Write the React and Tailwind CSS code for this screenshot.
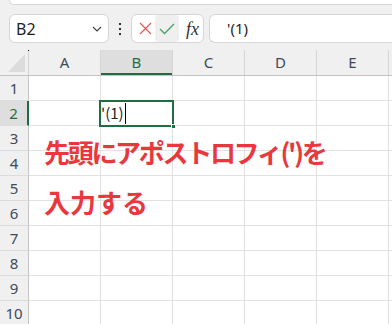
import React from 'react'

const UI = "font-['Noto_Sans','Noto_Sans_CJK_JP',sans-serif]"
const COLS = ['A', 'B', 'C', 'D', 'E', '']
const ROWS = [1, 2, 3, 4, 5, 6, 7, 8, 9, 10]

function HeaderRow() {
  return (
    <div className="flex h-[26px] border-b border-[#c4c4c4]">
      {/* corner */}
      <div className="relative w-[29px] shrink-0 border-r border-[#d4d4d4]">
        <svg className="absolute left-0 top-0" width="29" height="26" viewBox="0 0 29 26">
          <polygon points="25,4 25,22 8,22" fill="#dcdcdc" />
          <rect x="28" y="0" width="1" height="1" fill="#111" />
        </svg>
      </div>
      {COLS.map((c, i) => (
        <div
          key={i}
          className={
            'w-[72px] shrink-0 flex items-center justify-center text-[15px] border-r ' +
            (c === 'B'
              ? 'bg-[#dedede] text-[#1e6e42] border-[#d4d4d4] shadow-[inset_0_-2px_0_#1e6e42]'
              : 'text-[#3d4a5a] border-[#d4d4d4]')
          }
        >
          {c}
        </div>
      ))}
    </div>
  )
}

function SheetRow({ n }) {
  const active = n === 2
  return (
    <div className="flex h-[25px]">
      <div
        className={
          'w-[29px] shrink-0 flex items-center justify-center text-[15px] border-b border-[#dcdcdc] ' +
          (active
            ? 'bg-[#dedede] text-[#1e6e42] border-r-2 border-r-[#1e6e42]'
            : 'bg-[#f0f0f0] text-[#3d4a5a] border-r border-r-[#c4c4c4]')
        }
      >
        {n}
      </div>
      {COLS.map((c, i) => (
        <div key={i} className="w-[72px] shrink-0 bg-white border-r border-b border-[#e1e1e1]" />
      ))}
    </div>
  )
}

export default function App() {
  return (
    <div className={'relative w-[392px] h-[324px] overflow-hidden bg-[#f0f0f0] ' + UI}>
      {/* ribbon bottom edge */}
      <div className="ml-[9px] h-[5px] bg-white rounded-bl-[7px] border-b border-l border-[#d6d6d6]" />

      {/* formula bar */}
      <div className="flex items-center h-[29px] mt-[9px] mb-[7px]">
        <div className="ml-[9px] w-[100px] h-[29px] flex items-center justify-between bg-white border border-[#d6d6d6] rounded-[6px] pl-[6px] pr-[6px]">
          <span className="text-[16px] text-[#1f1f1f]">B2</span>
          <svg width="10" height="6" viewBox="0 0 10 6">
            <polyline points="1,1 5,5 9,1" fill="none" stroke="#444" strokeWidth="1.2" />
          </svg>
        </div>
        <div className="w-[22px] flex flex-col items-center gap-[3px]">
          <span className="w-[2px] h-[2px] bg-[#333]" />
          <span className="w-[2px] h-[2px] bg-[#333]" />
          <span className="w-[2px] h-[2px] bg-[#333]" />
        </div>
        <div className="w-[73px] h-[29px] flex items-center bg-white border border-[#d6d6d6] rounded-[6px] pl-[4px]">
          <div className="w-[18px] flex justify-center">
            <svg width="13" height="13" viewBox="0 0 13 13">
              <path d="M1 1 L12 12 M12 1 L1 12" stroke="#e25c5c" strokeWidth="1.3" fill="none" />
            </svg>
          </div>
          <div className="ml-[1px] w-[24px] h-[27px] rounded-[4px] bg-[#efefef] flex items-center justify-center">
            <svg width="16" height="12" viewBox="0 0 16 12">
              <polyline points="1,6 5.5,10.5 15,1" stroke="#4aa067" strokeWidth="1.3" fill="none" />
            </svg>
          </div>
          <span className="ml-[7px] text-[18px] italic text-[#333] font-['Liberation_Serif',serif] leading-none">fx</span>
        </div>
        <div className="ml-[5px] flex-1 h-[29px] bg-white border border-r-0 border-[#d6d6d6] rounded-l-[6px] flex items-center pl-[17px]">
          <span className="text-[15px] text-[#1f1f1f]">'(1)</span>
        </div>
      </div>

      {/* grid */}
      <div className="relative">
        <HeaderRow />
        {ROWS.map(n => (
          <SheetRow key={n} n={n} />
        ))}

        {/* active cell B2 */}
        <div className="absolute left-[99px] top-[50px] w-[75px] h-[27px] border-2 border-[#1e6e42] flex items-center">
          <span className="text-[15px] text-[#1f1f1f] font-['Noto_Sans_CJK_JP',sans-serif]">'(1)</span>
          <span className="ml-[1px] w-[1px] h-[21px] bg-black" />
          <span className="absolute right-[-4px] bottom-[-4px] w-[5px] h-[5px] bg-[#1e6e42] border border-white" />
        </div>

        {/* annotation */}
        <div className="absolute left-[44px] top-[77px] text-[26px] leading-[50px] font-bold text-[#e8383d] font-['Noto_Sans_CJK_JP',sans-serif]">
          <p className="tracking-[-2.3px] whitespace-nowrap">先頭にアポストロフィ(')を</p>
          <p>入力する</p>
        </div>
      </div>
    </div>
  )
}
